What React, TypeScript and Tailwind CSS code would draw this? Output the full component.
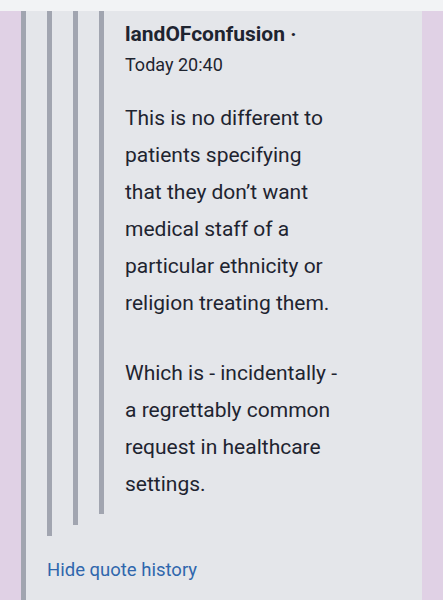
export default function App() {
  return (
    <div className="flex min-h-[600px] flex-col bg-[#f2f3f5] font-['Roboto',sans-serif]">
      <div className="h-[11px]" />
      <div className="flex flex-1 bg-[#e0d1e5] px-[21px]">
        <div className="flex flex-1 flex-col border-l-[5px] border-[#a1a5b0] bg-[#e4e6ea] pl-[21px]">
          <div className="border-l-[5px] border-[#a1a5b0] pb-[11px] pl-[21px]">
            <div className="border-l-[5px] border-[#a1a5b0] pb-[11px] pl-[21px]">
              <div className="border-l-[5px] border-[#a1a5b0] pb-[11px] pl-[21px] pt-[9px] text-[#1e2430]">
                <div className="text-[21px] font-bold leading-[28px]">landOFconfusion ·</div>
                <div className="mt-[4px] text-[18px] leading-[26px]">Today 20:40</div>
                <p className="mt-[22px] max-w-[215px] text-[21px] leading-[37px]">
                  This is no different to patients specifying that they don’t want medical staff of a
                  particular ethnicity or religion treating them.
                </p>
                <p className="mt-[33px] max-w-[215px] text-[21px] leading-[37px]">
                  Which is - incidentally - a regrettably common request in healthcare settings.
                </p>
              </div>
            </div>
          </div>
          <div className="mt-[21px] text-[18.5px] leading-[26px] text-[#2f66ad]">Hide quote history</div>
        </div>
      </div>
    </div>
  );
}
